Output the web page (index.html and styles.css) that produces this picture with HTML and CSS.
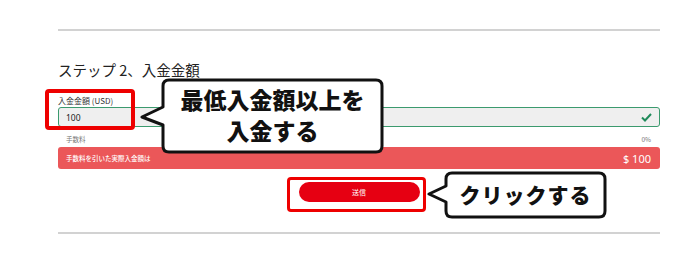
FILE: index.html
```html
<!DOCTYPE html>
<html lang="ja">
<head>
<meta charset="utf-8">
<link rel="stylesheet" href="styles.css">
</head>
<body>
<div class="page">
  <hr class="rule rule-top">
  <section class="step">
    <h2 class="step-title">ステップ 2、入金金額</h2>
    <div class="field">
      <label class="field-label">入金金額 (USD)</label>
      <div class="field-input">
        <span class="field-value">100</span>
        <svg class="check" width="11" height="9" viewBox="0 0 11 9"><path d="M1 4.5 L4 7.5 L10 1" fill="none" stroke="#1f8a5a" stroke-width="2"/></svg>
      </div>
    </div>
    <div class="fee-row"><span>手数料</span><span>0%</span></div>
    <div class="total-bar"><span class="total-label">手数料を引いた実際入金額は</span><span class="total-amount">$ 100</span></div>
    <div class="actions"><button class="submit">送信</button></div>
  </section>
  <hr class="rule rule-bottom">

  <div class="highlight highlight-field"></div>
  <div class="highlight highlight-button"></div>

  <div class="callout callout-amount">
    <svg class="callout-shape" width="246" height="77" viewBox="0 0 246 77"><path d="M30 2 H237 Q243 2 243 8 V68 Q243 74 237 74 H30 Q24 74 24 68 V47 L3 39 L24 29 V8 Q24 2 30 2 Z" fill="#fff" stroke="#111" stroke-width="3" stroke-linejoin="round"/></svg>
    <div class="callout-text callout-text-amount">最低入金額以上を<br>入金する</div>
  </div>

  <div class="callout callout-click">
    <svg class="callout-shape" width="183" height="48" viewBox="0 0 183 48"><path d="M27 2 H174 Q180 2 180 8 V40 Q180 46 174 46 H27 Q21 46 21 40 V31 L4 23 L21 15 V8 Q21 2 27 2 Z" fill="#fff" stroke="#111" stroke-width="3" stroke-linejoin="round"/></svg>
    <div class="callout-text callout-text-click">クリックする</div>
  </div>
</div>
</body>
</html>
```
FILE: styles.css
```css
* { box-sizing: border-box; }
html, body { margin: 0; padding: 0; background: #fff; }
body { font-family: "Noto Sans", "Noto Sans CJK JP", sans-serif; color: #222; }

.page {
  position: relative;
  width: 700px;
  height: 256px;
  padding: 29px 40px 0 58px;
}

.rule {
  margin: 0;
  border: 0;
  height: 2px;
  background: #d2d2d2;
  width: 602px;
}

.step { width: 602px; }

.step-title {
  margin: 29px 0 0;
  font-size: 14.5px;
  font-weight: 400;
  line-height: 20px;
  color: #222;
  font-family: "Noto Sans CJK JP", sans-serif;
}

.field { margin-top: 16px; }
.field-label {
  display: block;
  font-size: 8px;
  line-height: 10px;
  color: #333;
  font-family: "Noto Sans CJK JP", sans-serif;
}
.field-input {
  margin-top: 1px;
  height: 20px;
  border: 1px solid #3b9a6e;
  border-radius: 3px;
  background: #efefef;
  display: flex;
  align-items: center;
  justify-content: space-between;
  padding: 0 7px 0 7px;
}
.field-value { font-size: 8.5px; color: #222; }
.check { display: block; }

.fee-row {
  display: flex;
  justify-content: space-between;
  padding: 0 9px 0 8px;
  margin-top: 7px;
  font-size: 6.5px;
  line-height: 10px;
  color: #777;
  font-family: "Noto Sans CJK JP", sans-serif;
}

.total-bar {
  margin-top: 3px;
  height: 22px;
  border-radius: 3px;
  background: #eb5759;
  display: flex;
  justify-content: space-between;
  align-items: center;
  padding: 0 9px 0 8px;
  color: #fff;
}
.total-label { font-size: 6.5px; font-family: "Noto Sans CJK JP", sans-serif; font-weight: 500; }
.total-amount { font-size: 11px; }

.actions {
  display: flex;
  justify-content: center;
  margin-top: 13px;
}
.submit {
  width: 121px;
  height: 20px;
  border: 0;
  border-radius: 10px;
  background: #e60012;
  color: #fff;
  font-size: 7px;
  font-family: "Noto Sans CJK JP", sans-serif;
  padding: 0;
}

.rule-bottom { margin-top: 30px; }

.highlight {
  position: absolute;
  border: 4px solid #ee0000;
  border-radius: 4px;
}
.highlight-field { left: 45px; top: 89px; width: 90px; height: 41px; }
.highlight-button { left: 287px; top: 177px; width: 139px; height: 35px; border-width: 3.5px; }

.callout { position: absolute; }
.callout-shape { position: absolute; left: 0; top: 0; }
.callout-amount { left: 139px; top: 78px; width: 246px; height: 77px; }
.callout-click { left: 425px; top: 171px; width: 183px; height: 48px; }

.callout-text {
  position: absolute;
  text-align: center;
  color: #111;
  font-family: "Noto Sans CJK JP", sans-serif;
  font-weight: 900;
}
.callout-text-amount {
  left: 24px; top: 6px; width: 219px;
  font-size: 23px;
  line-height: 31px;
}
.callout-text-click {
  left: 21px; top: 9px; width: 159px;
  font-size: 21px;
  line-height: 28px;
  letter-spacing: 1px;
}
```
